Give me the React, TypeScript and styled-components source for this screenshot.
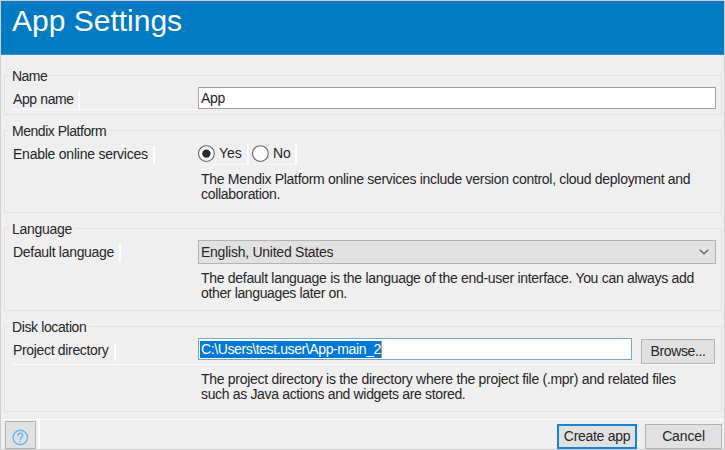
import React from 'react';
import styled, { createGlobalStyle, css } from 'styled-components';

const Global = createGlobalStyle`
  * { box-sizing: border-box; }
  body {
    margin: 0;
    background: #efefef;
    font-family: 'Liberation Sans', Arial, sans-serif;
    font-size: 14px;
    line-height: 15px;
    color: #262626;
    overflow: hidden;
  }
`;

const Dialog = styled.main`
  width: 725px;
  height: 450px;
  border: 1px solid #cfcfcf;
  background: #efefef;
  display: flex;
  flex-direction: column;
`;

const Header = styled.header`
  height: 54px;
  flex: none;
  background: #007ac3;
  border-bottom: 1px solid #2a8dcb;
  padding: 3px 0 0 11px;
`;

const Title = styled.h1`
  margin: 0;
  font-size: 30px;
  line-height: 34px;
  font-weight: 400;
  color: #fff;
`;

const Sections = styled.div`
  display: flex;
  flex-direction: column;
  gap: 8px;
  padding: 13px 2px 0 3px;
`;

const Group = styled.fieldset<{ $height: number }>`
  height: ${(p) => p.$height}px;
  min-width: 0;
  margin: 0;
  padding: 0;
  border: 1px solid #e1e1e1;
`;

const Legend = styled.legend`
  margin-left: 4px;
  padding: 1px 3px 0;
  height: 15px;
  white-space: nowrap;
`;

const Row = styled.div<{ $top: number; $rule?: boolean; $height: number }>`
  display: flex;
  align-items: flex-start;
  margin: 0 5px 0 7px;
  padding-top: ${(p) => p.$top}px;
  height: ${(p) => p.$height}px;
  ${(p) => p.$rule && css`border-bottom: 1px solid #fbfbfb;`}
`;

const LabelCell = styled.div<{ $rule?: boolean }>`
  width: 186px;
  height: 23px;
  flex: none;
  ${(p) => p.$rule && css`border-bottom: 1px solid #fbfbfb;`}
`;

const Label = styled.label<{ $drop: number; $inset?: number; $width: number }>`
  display: block;
  width: ${(p) => p.$width}px;
  height: 18px;
  margin-top: ${(p) => p.$drop}px;
  padding-top: ${(p) => p.$inset ?? 0}px;
  padding-left: 1px;
  border-right: 2px solid #fdfdfd;
  white-space: nowrap;
`;

const Field = styled.div<{ $focused?: boolean }>`
  flex: 1;
  height: 22px;
  border: 1px solid ${(p) => (p.$focused ? '#79a5c9' : '#a0a0a0')};
  background: #fff;
  padding: 2px 1px;
  display: flex;
  align-items: flex-start;
  color: #1c1c1c;
`;

const Selection = styled.span`
  height: 17px;
  line-height: 17px;
  padding-left: 1px;
  background: #0078d7;
  color: #fff;
  border-right: 1px solid #d98a50;
  white-space: nowrap;
`;

const Plain = styled.span`
  padding: 1px 0 0 1px;
`;

const Radios = styled.div`
  display: flex;
  gap: 3px;
`;

const Radio = styled.label<{ $width: number }>`
  display: flex;
  align-items: center;
  gap: 4px;
  width: ${(p) => p.$width}px;
  height: 22px;
  border-right: 2px solid #fdfdfd;
  border-bottom: 1px solid #f8f8f8;
`;

const Select = styled.div`
  flex: 1;
  height: 24px;
  display: flex;
  align-items: center;
  justify-content: space-between;
  padding: 0 6px 0 2px;
  border: 1px solid #b4b4b4;
  background: #e1e1e1;
`;

const Note = styled.p`
  margin: 7px 0 0 196px;
  white-space: nowrap;
`;

const Button = styled.button<{ $width: number; $height?: number; $primary?: boolean }>`
  flex: none;
  width: ${(p) => p.$width}px;
  height: ${(p) => p.$height ?? 25}px;
  padding: 0;
  font: inherit;
  color: inherit;
  background: #e1e1e1;
  border: ${(p) => (p.$primary ? '2px solid #1683da' : '1px solid #b4b4b4')};
  display: flex;
  align-items: center;
  justify-content: center;
`;

const BrowseButton = styled(Button)`
  margin: 1px 1px 0 9px;
`;

const Footer = styled.footer`
  margin-top: 7px;
  height: 30px;
  border-top: 1px solid #fcfcfc;
  display: flex;
  padding: 0 2px 0 4px;
`;

const HelpCell = styled.div`
  width: 35px;
  padding-top: 1px;
  border-right: 2px solid #fdfdfd;
`;

const HelpButton = styled(Button)`
  align-items: flex-end;
  padding-bottom: 2px;
`;

const Actions = styled.div`
  margin-left: auto;
  display: flex;
  gap: 8px;
  padding-top: 4px;
`;

const Text = styled.span<{ $tight?: number }>`
  letter-spacing: ${(p) => -(p.$tight ?? 0.3)}px;
`;

const RadioDot = ({ checked }: { checked?: boolean }) => (
  <svg width="17" height="18" viewBox="0 0 17 18">
    <circle cx="8.4" cy="8.6" r="7.9" fill="#fff" stroke="#666" strokeWidth="1.1" />
    {checked && <circle cx="8.4" cy="8.6" r="4.2" fill="#2b2b2b" />}
  </svg>
);

const Chevron = () => (
  <svg width="10" height="6" viewBox="0 0 10 6" fill="none" stroke="#666" strokeWidth="1.3">
    <path d="M.7.7 5 4.8 9.3.7" />
  </svg>
);

const HelpIcon = () => (
  <svg width="17" height="17" viewBox="0 0 16 16" fill="none" stroke="#68b5ec" strokeWidth="1.3">
    <circle cx="7.8" cy="8" r="6.8" />
    <path d="M5.5 6.4C5.5 3.2 10.2 3.4 10.1 6.1 10 7.8 7.8 7.9 7.8 10" />
    <path d="M7.8 11v1.5" strokeWidth="1.5" />
  </svg>
);

export default function App() {
  return (
    <>
      <Global />
      <Dialog>
        <Header>
          <Title>App Settings</Title>
        </Header>
        <Sections>
          <Group $height={47}>
            <Legend><Text $tight={0.55}>Name</Text></Legend>
            <Row $top={4} $height={27}>
              <LabelCell $rule>
                <Label $drop={4} $inset={1} $width={68}><Text $tight={0.38}>App name</Text></Label>
              </LabelCell>
              <Field><Plain><Text>App</Text></Plain></Field>
            </Row>
          </Group>

          <Group $height={90}>
            <Legend><Text $tight={0.47}>Mendix Platform</Text></Legend>
            <Row $top={5} $height={27}>
              <LabelCell>
                <Label $drop={3} $inset={1} $width={143}><Text $tight={0.24}>Enable online services</Text></Label>
              </LabelCell>
              <Radios>
                <Radio $width={51}><RadioDot checked /><Text $tight={0.1}>Yes</Text></Radio>
                <Radio $width={45}><RadioDot /><Text $tight={0.1}>No</Text></Radio>
              </Radios>
            </Row>
            <Note>
              <Text>The Mendix Platform online services include version control, cloud deployment and</Text><br />
              <Text>collaboration.</Text>
            </Note>
          </Group>

          <Group $height={90}>
            <Legend><Text>Language</Text></Legend>
            <Row $top={4} $height={28}>
              <LabelCell>
                <Label $drop={4} $inset={1} $width={109}><Text>Default language</Text></Label>
              </LabelCell>
              <Select><Text $tight={0.25}>English, United States</Text><Chevron /></Select>
            </Row>
            <Note>
              <Text>The default language is the language of the end-user interface. You can always add</Text><br />
              <Text $tight={0.36}>other languages later on.</Text>
            </Note>
          </Group>

          <Group $height={93}>
            <Legend><Text $tight={0.38}>Disk location</Text></Legend>
            <Row $top={4} $height={31} $rule>
              <LabelCell>
                <Label $drop={5} $width={104}><Text $tight={0.33}>Project directory</Text></Label>
              </LabelCell>
              <Field $focused>
                <Selection><Text $tight={0.4}>C:\Users\test.user\App-main_2</Text></Selection>
              </Field>
              <BrowseButton $width={74}><Text $tight={0.38}>Browse...</Text></BrowseButton>
            </Row>
            <Note>
              <Text $tight={0.29}>The project directory is the directory where the project file (.mpr) and related files</Text><br />
              <Text $tight={0.34}>such as Java actions and widgets are stored.</Text>
            </Note>
          </Group>
        </Sections>
        <Footer>
          <HelpCell>
            <HelpButton $width={31} $height={28} aria-label="Help"><HelpIcon /></HelpButton>
          </HelpCell>
          <Actions>
            <Button $width={80} $primary><Text>Create app</Text></Button>
            <Button $width={77}><Text $tight={0.14}>Cancel</Text></Button>
          </Actions>
        </Footer>
      </Dialog>
    </>
  );
}
